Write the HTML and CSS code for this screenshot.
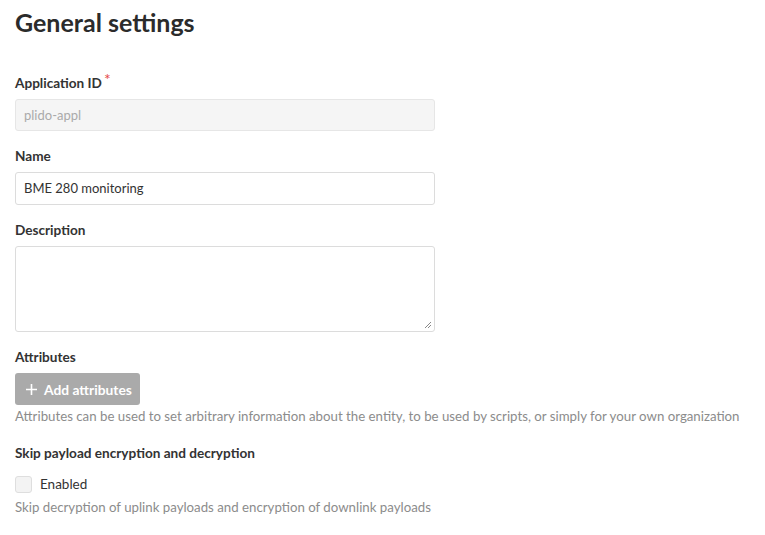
FILE: index.html
```html
<!DOCTYPE html>
<html>
<head>
<meta charset="utf-8">
<link rel="stylesheet" href="styles.css">
</head>
<body>
<div class="page">
  <h1 class="title">General settings</h1>
  <div class="field">
    <label class="label">Application ID<span class="req">*</span></label>
    <div class="input disabled">plido-appl</div>
  </div>
  <div class="field">
    <label class="label">Name</label>
    <div class="input">BME 280 monitoring</div>
  </div>
  <div class="field">
    <label class="label">Description</label>
    <div class="textarea">
      <svg class="grip" width="8" height="8" viewBox="0 0 8 8"><path d="M7 1L1 7M7 4L4 7" stroke="#888" stroke-width="1" fill="none"/></svg>
    </div>
  </div>
  <div class="field">
    <label class="label">Attributes</label>
    <div class="btn"><svg class="plus" width="11" height="11" viewBox="0 0 11 11"><path d="M5.5 0V11M0 5.5H11" stroke="#fff" stroke-width="1.6"/></svg>Add attributes</div>
    <div class="help">Attributes can be used to set arbitrary information about the entity, to be used by scripts, or simply for your own organization</div>
  </div>
  <div class="field skip">
    <label class="label">Skip payload encryption and decryption</label>
    <div class="check-row"><span class="checkbox"></span><span class="check-text">Enabled</span></div>
    <div class="help">Skip decryption of uplink payloads and encryption of downlink payloads</div>
  </div>
</div>
</body>
</html>
```
FILE: styles.css
```css
html, body { margin: 0; padding: 0; background: #fff; }
body { font-family: Lato, "Liberation Sans", sans-serif; color: #333; }
.page { padding: 4px 15px 0 15px; }
.title { font-size: 25px; font-weight: 700; line-height: 36px; margin: 0 0 33px 0; color: #2b2b2b; }
.field { display: flex; flex-direction: column; align-items: flex-start; margin-bottom: 15px; }
.field.skip { padding-top: 2px; }
.label { font-size: 13.6px; font-weight: 700; line-height: 20px; margin-bottom: 6px; color: #333; }
.req { color: #e54848; font-weight: 400; font-size: 16px; margin-left: 2px; position: relative; top: -3px; line-height: 0; }
.input { box-sizing: border-box; width: 420px; height: 33px; border: 1px solid #dcdcdc; border-radius: 3px; padding: 0 8px; font-size: 13px; line-height: 31px; color: #333; background: #fff; }
.input.disabled { background: #f5f5f5; color: #aaa; border-color: #e6e6e6; height: 32px; line-height: 30px; }
.textarea { box-sizing: border-box; width: 420px; height: 86px; border: 1px solid #dcdcdc; border-radius: 3px; background: #fff; display: flex; justify-content: flex-end; align-items: flex-end; padding: 0 2px 2px 0; }
.grip { display: block; }
.btn { box-sizing: border-box; height: 32px; width: 125px; background: #aaa; color: #fff; border-radius: 3px; font-size: 13.8px; font-weight: 700; display: flex; align-items: center; padding-left: 11px; }
.plus { display: block; margin-right: 7px; }
.help { font-size: 13.25px; color: #8c8c8c; line-height: 20px; margin-top: 1px; }
.check-row { display: flex; align-items: center; height: 20px; margin-top: 5px; margin-bottom: 2px; }
.checkbox { box-sizing: border-box; width: 17px; height: 17px; border: 1px solid #dedede; border-radius: 3px; background: #f3f3f3; margin-right: 8px; }
.check-text { font-size: 13.5px; color: #333; }
```
